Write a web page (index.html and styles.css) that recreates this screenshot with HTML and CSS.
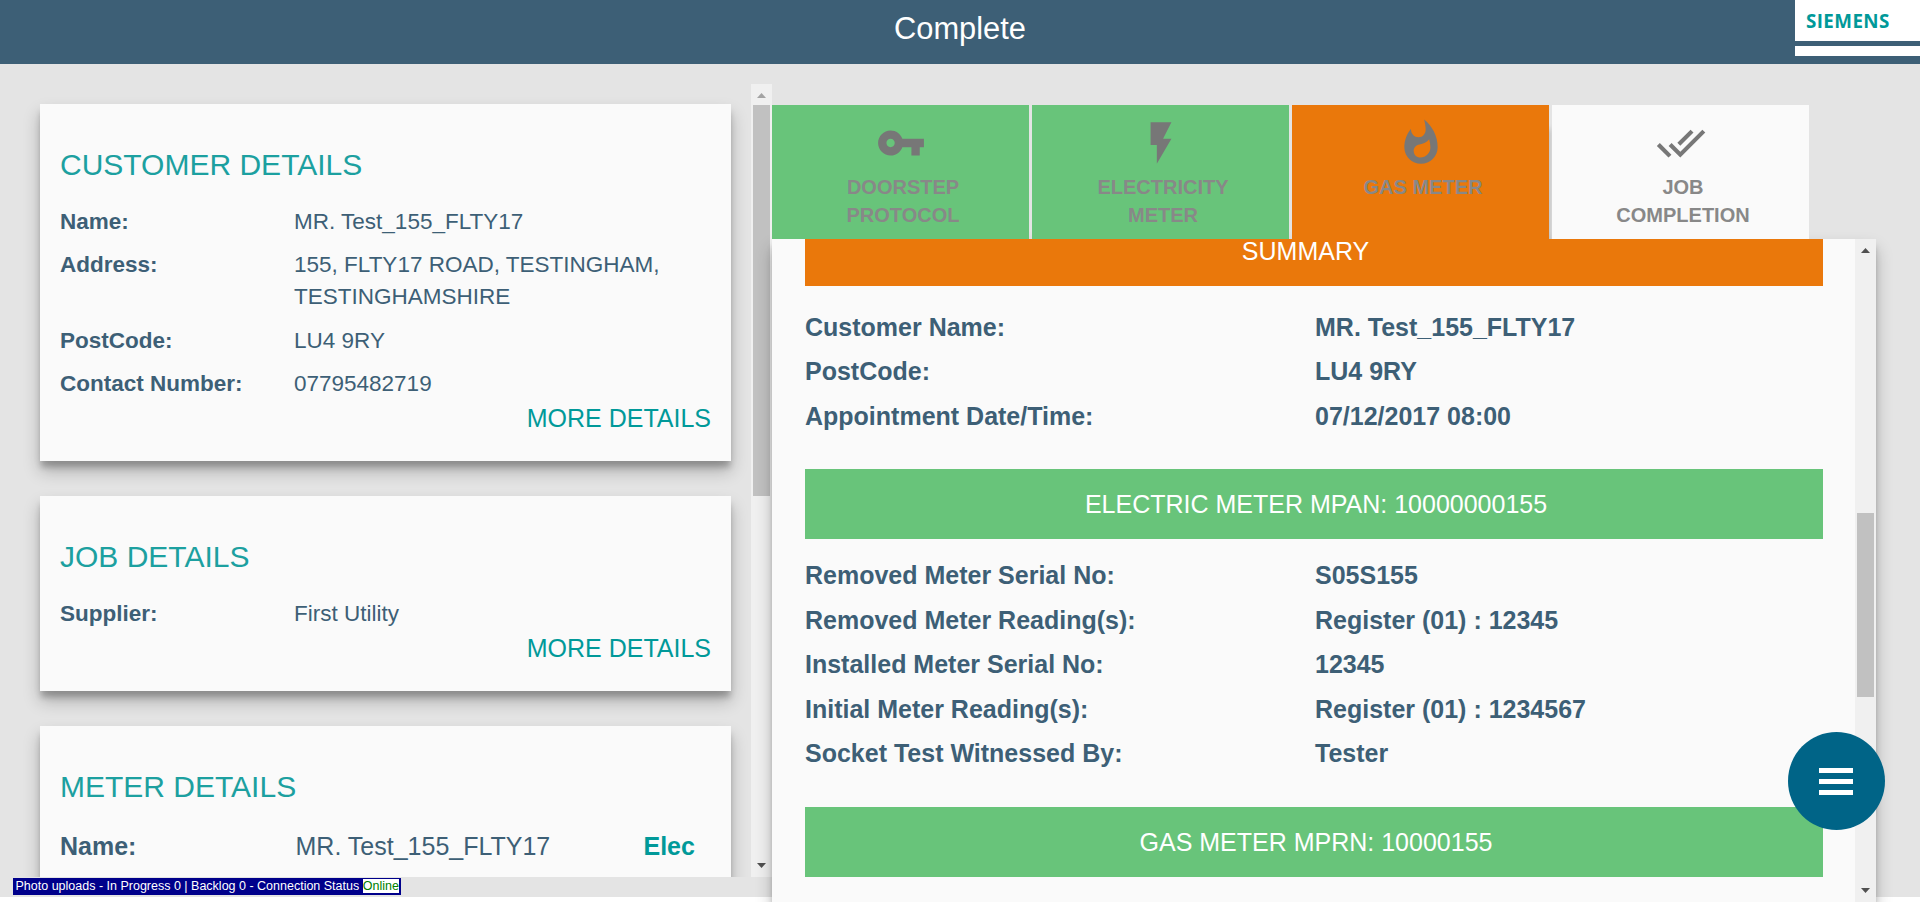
FILE: index.html
```html
<!DOCTYPE html>
<html lang="en">
<head>
<meta charset="utf-8">
<title>Complete</title>
<link rel="stylesheet" href="styles.css">
</head>
<body>
<header class="topbar">
  <h1 class="title">Complete</h1>
  <div class="brand"><div class="brand-name">SIEMENS</div><div class="brand-line"></div></div>
</header>
<main class="page">
  <section class="sidebar">
    <div class="cards">
      <article class="card card-customer">
        <h2>CUSTOMER DETAILS</h2>
        <dl class="facts">
          <dt>Name:</dt><dd>MR. Test_155_FLTY17</dd>
          <dt>Address:</dt><dd>155, FLTY17 ROAD, TESTINGHAM, TESTINGHAMSHIRE</dd>
          <dt>PostCode:</dt><dd>LU4 9RY</dd>
          <dt>Contact Number:</dt><dd>07795482719</dd>
        </dl>
        <a class="more">MORE DETAILS</a>
      </article>
      <article class="card card-job">
        <h2>JOB DETAILS</h2>
        <dl class="facts">
          <dt>Supplier:</dt><dd>First Utility</dd>
        </dl>
        <a class="more">MORE DETAILS</a>
      </article>
      <article class="card card-meter">
        <h2>METER DETAILS</h2>
        <div class="meter-row"><b>Name:</b><span>MR. Test_155_FLTY17</span><b class="fuel">Elec</b></div>
      </article>
    </div>
    <div class="scrollbar">
      <svg class="arrow arrow-off" viewBox="0 0 21 21"><path d="M6 14h9l-4.500-5z"/></svg>
      <div class="thumb thumb-left"></div>
      <svg class="arrow arrow-end" viewBox="0 0 21 21"><path d="M6 7h9l-4.500 5z"/></svg>
    </div>
  </section>
  <section class="work">
    <nav class="tabs">
      <div class="tab done">
        <svg class="icon" viewBox="0 0 24 24"><path d="M12.650 10C11.830 7.670 9.610 6 7 6c-3.310 0-6 2.690-6 6s2.690 6 6 6c2.610 0 4.830-1.670 5.650-4H17v4h4v-4h2v-4H12.650zM7 14c-1.100 0-2-.9-2-2s.9-2 2-2 2 .9 2 2-.9 2-2 2z"/></svg>
        <span>DOORSTEP<br>PROTOCOL</span>
      </div>
      <div class="tab done">
        <svg class="icon" viewBox="0 0 24 24"><path d="M7 2v11h3v9l7-12h-4l4-8z"/></svg>
        <span>ELECTRICITY<br>METER</span>
      </div>
      <div class="tab active">
        <svg class="icon" viewBox="0 0 24 24"><path d="M13.500.67s.74 2.650.74 4.800c0 2.060-1.350 3.730-3.410 3.730-2.070 0-3.630-1.670-3.630-3.730l.03-.36C5.210 7.510 4 10.620 4 14c0 4.420 3.580 8 8 8s8-3.580 8-8C20 8.610 17.410 3.800 13.500.67zM11.710 19c-1.780 0-3.220-1.400-3.220-3.140 0-1.620 1.050-2.760 2.810-3.120 1.770-.36 3.600-1.210 4.620-2.580.39 1.290.59 2.650.59 4.040 0 2.650-2.150 4.800-4.800 4.800z"/></svg>
        <span>GAS METER</span>
      </div>
      <div class="tab">
        <svg class="icon" viewBox="0 0 24 24"><path d="M18 7l-1.410-1.410-6.340 6.340 1.410 1.410L18 7zm4.240-1.410L11.660 16.170 7.480 12l-1.410 1.410L11.660 19l12-12-1.420-1.410zM.41 13.410L6 19l1.410-1.410L1.830 12 .41 13.410z"/></svg>
        <span>JOB<br>COMPLETION</span>
      </div>
    </nav>
    <div class="panel">
      <div class="content">
        <div class="band band-summary">SUMMARY</div>
        <dl class="summary summary-visit">
          <dt>Customer Name:</dt><dd>MR. Test_155_FLTY17</dd>
          <dt>PostCode:</dt><dd>LU4 9RY</dd>
          <dt>Appointment Date/Time:</dt><dd>07/12/2017 08:00</dd>
        </dl>
        <div class="band">ELECTRIC METER MPAN: 10000000155</div>
        <dl class="summary summary-meter">
          <dt>Removed Meter Serial No:</dt><dd>S05S155</dd>
          <dt>Removed Meter Reading(s):</dt><dd>Register (01) : 12345</dd>
          <dt>Installed Meter Serial No:</dt><dd>12345</dd>
          <dt>Initial Meter Reading(s):</dt><dd>Register (01) : 1234567</dd>
          <dt>Socket Test Witnessed By:</dt><dd>Tester</dd>
        </dl>
        <div class="band">GAS METER MPRN: 10000155</div>
      </div>
      <div class="scrollbar">
        <svg class="arrow" viewBox="0 0 21 21"><path d="M6 14h9l-4.500-5z"/></svg>
        <div class="thumb thumb-right"></div>
        <svg class="arrow arrow-end" viewBox="0 0 21 21"><path d="M6 7h9l-4.500 5z"/></svg>
      </div>
    </div>
  </section>
</main>
<div class="status">Photo uploads - In Progress 0 | Backlog 0 - Connection Status <span class="online">Online</span></div>
<button class="menu" aria-label="Menu"><i></i><i></i><i></i></button>
</body>
</html>
```

FILE: styles.css
```css
* { box-sizing: border-box; }
body {
  margin: 0;
  height: 902px;
  overflow: hidden;
  position: relative;
  background: #fff;
  color: #3d5f76;
  font-family: "Liberation Sans", Arial, sans-serif;
}
h1, h2, dl, dd { margin: 0; font-weight: 400; }
.topbar {
  height: 64px;
  background: #3d5f76;
  display: grid;
  grid-template-columns: 125px 1fr 125px;
}
.title {
  grid-column: 2;
  text-align: center;
  color: #fff;
  font-size: 30.800px;
  line-height: 57px;
}
.brand { height: 56px; background: #fff; padding-top: 11px; }
.brand-name {
  height: 30px;
  padding-left: 11px;
  color: #099;
  font: 700 18.800px/21px "Open Sans", sans-serif;
  letter-spacing: .4px;
}
.brand-line { height: 5px; background: #3d5f76; }

.page {
  height: 833px;
  background: #e4e4e4;
  display: flex;
  align-items: flex-start;
}
.sidebar {
  width: 772px;
  height: 793px;
  margin-top: 20px;
  display: flex;
  overflow: hidden;
}
.cards { width: 751px; padding: 20px 20px 0 40px; }
.card {
  height: 357px;
  margin-bottom: 35px;
  padding: 39px 20px 0;
  background: #fafafa;
  box-shadow: 0 7px 6px -1px rgba(0, 0, 0, .22), 0 10px 16px rgba(0, 0, 0, .24);
}
.card-job { height: 195px; }
.card h2 { color: #1ca0a0; font-size: 30px; line-height: 44px; }
.facts {
  margin-top: 19px;
  display: grid;
  grid-template-columns: 234px 1fr;
  row-gap: 11.500px;
  font-size: 22.500px;
  line-height: 32px;
}
.card-customer .facts { row-gap: 11.300px; }
dt { font-weight: 700; }
.more {
  display: block;
  text-align: right;
  color: #099;
  font-size: 25px;
  line-height: 36px;
}
.meter-row {
  margin-top: 19px;
  display: grid;
  grid-template-columns: 235.500px 348px 1fr;
  font-size: 25px;
  line-height: 36px;
}
.fuel { color: #099; }

.scrollbar {
  width: 21px;
  background: #f0f0f0;
  display: flex;
  flex-direction: column;
  align-items: center;
}
.arrow { width: 21px; height: 21px; fill: #505050; display: block; }
.arrow-off { fill: #a3a3a3; }
.arrow-end { margin-top: auto; }
.thumb { width: 17px; background: #c1c1c1; }
.thumb-left { height: 391px; }
.thumb-right { height: 184px; margin-top: 253px; }

.work { width: 1104px; height: 797px; margin-top: 41px; }
.tabs { display: flex; gap: 3px; height: 134px; }
.tab {
  width: 257px;
  padding-top: 13px;
  background: #fafafa;
  display: flex;
  flex-direction: column;
  align-items: center;
  text-align: center;
  color: #888;
  font-size: 20px;
  font-weight: 700;
  line-height: 28px;
}
.tab span { margin: 5px 0 0 5px; }
.done { background: #68c47a; }
.active {
  background: #ea780b;
  box-shadow: 3px 22px 6px -2px rgba(0, 0, 0, .2);
  clip-path: inset(0 -10px 0 0);
}
.tab:last-child { position: relative; }
.icon { width: 50px; height: 50px; fill: #777; display: block; }
.panel {
  height: 663px;
  background: #fafafa;
  display: flex;
  box-shadow: 0 7px 6px -1px rgba(0, 0, 0, .22), 0 10px 16px rgba(0, 0, 0, .24);
}
.content { width: 1083px; padding: 0 32px 0 33px; }
.band {
  height: 70px;
  padding-left: 4px;
  background: #68c47a;
  color: #fff;
  font-size: 25px;
  line-height: 70px;
  text-align: center;
}
.band-summary { height: 47px; padding: 0 17px 0 0; background: #ea780b; line-height: 24px; }
.summary {
  display: grid;
  grid-template-columns: 510px 1fr;
  grid-auto-rows: 44.600px;
  font-size: 25px;
  font-weight: 700;
  line-height: 44px;
}
.summary-visit { height: 183px; padding-top: 18.800px; }
.summary-meter { height: 268px; padding-top: 14px; }
.summary dd { font-weight: 700; }

.status {
  position: absolute;
  left: 13px;
  top: 878px;
  width: 388px;
  height: 17px;
  padding: 1px 2.500px;
  background: #00008b;
  color: #fff;
  font-size: 12.500px;
  line-height: 14px;
  white-space: nowrap;
}
.online { display: inline-block; background: #fff; color: #008000; }
.menu {
  position: absolute;
  left: 1788px;
  top: 732px;
  width: 97px;
  height: 98px;
  padding: 0 1px 0 0;
  border: 0;
  border-radius: 50%;
  background: #006487;
  display: flex;
  flex-direction: column;
  align-items: center;
  justify-content: center;
  gap: 6px;
}
.menu i { width: 34px; height: 5px; background: #fff; }
```
